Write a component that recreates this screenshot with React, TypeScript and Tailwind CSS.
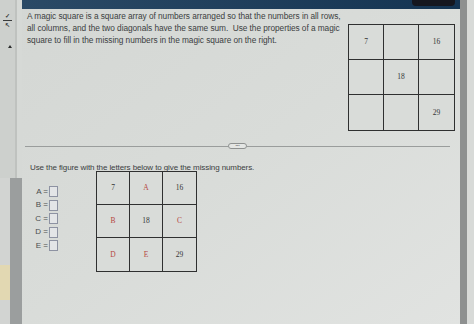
import React from "react";

const sans = { fontFamily: '"Liberation Sans", Arial, sans-serif' };
const serif = { fontFamily: '"Liberation Serif", "Times New Roman", serif' };

function Grid({ cells, size, fs }: { cells: { t: string; red?: boolean }[]; size: number; fs: string }) {
  return (
    <div
      className="grid grid-cols-3 border border-[#2f3030] bg-[#d9dcd9]"
      style={{ width: size * 3 + 2, ...serif }}
    >
      {cells.map((c, i) => (
        <div
          key={i}
          className={`flex items-center justify-center ${fs} border-[#2f3030] ${i % 3 !== 2 ? "border-r" : ""} ${i < 6 ? "border-b" : ""} ${c.red ? "text-[#b5463e]" : "text-[#353535]"}`}
          style={{ height: size }}
        >
          {c.t}
        </div>
      ))}
    </div>
  );
}

export default function App() {
  const top = [{ t: "7" }, { t: "" }, { t: "16" }, { t: "" }, { t: "18" }, { t: "" }, { t: "" }, { t: "" }, { t: "29" }];
  const bottom = [
    { t: "7" },
    { t: "A", red: true },
    { t: "16" },
    { t: "B", red: true },
    { t: "18" },
    { t: "C", red: true },
    { t: "D", red: true },
    { t: "E", red: true },
    { t: "29" },
  ];
  return (
    <div className="w-[474px] h-[324px] flex overflow-hidden bg-[#d6d8d6] [font-variant-ligatures:none]" style={sans}>
      {/* left column */}
      <div className="w-[22px] flex flex-col shrink-0">
        <div className="h-[178px] flex">
          <div className="w-[15px] bg-[#cdd0cd] flex flex-col items-center pt-[13px]">
            <div className="flex flex-col items-center leading-none text-[#3a3c3c]">
              <span className="text-[6px] leading-[6px] font-bold">✓</span>
              <span className="block w-[9px] h-[1px] bg-[#3a3c3c] my-[1px]"></span>
              <span className="text-[6px] leading-[6px] font-bold">↖</span>
            </div>
            <div className="mt-[17px] ml-[5px] w-0 h-0 border-l-[2px] border-r-[2px] border-b-[3px] border-l-transparent border-r-transparent border-b-[#2a2c2c]"></div>
          </div>
          <div className="w-[2px] bg-[#bfc2bf]"></div>
          <div className="flex-1 bg-[#d6d9d6]"></div>
        </div>
        <div className="flex-1 flex">
          <div className="w-[10px] flex flex-col bg-[#d2d4d2]">
            <div className="h-[87px]"></div>
            <div className="h-[35px] bg-[#e2d8b2]"></div>
          </div>
          <div className="w-[12px] bg-[#9b9e9e]"></div>
        </div>
      </div>

      {/* main panel */}
      <div className="w-[438px] shrink-0 flex flex-col bg-gradient-to-br from-[#d4d7d4] via-[#d9dcd9] to-[#e1e3e1]">
        <div className="h-[9px] flex bg-gradient-to-r from-[#2b4a66] to-[#143452]">
          <div className="ml-auto mr-[5px] w-[43px] h-[6px] rounded-b-[4px] bg-[#15171f]"></div>
        </div>
        <div className="flex">
          <p className="ml-[5px] mt-[1px] w-[321px] shrink-0 text-[8.3px] leading-[12px] tracking-[-0.05px] text-[#3b3e3f]">
            A magic square is a square array of numbers arranged so that the numbers in all rows, all columns, and the two diagonals have the same sum.&nbsp; Use the properties of a magic square to fill in the missing numbers in the magic square on the right.
          </p>
          <div className="ml-auto mr-[5px] mt-[15px]">
            <Grid cells={top} size={35} fs="text-[7.5px]" />
          </div>
        </div>
        <div className="mt-[12px] ml-[3px] mr-[10px] flex items-center">
          <div className="flex-1 h-[1px] bg-[#9a9d9c]"></div>
          <div className="w-[19px] h-[6px] rounded-full border border-[#8e9190] bg-[#e4e6e4] flex items-center justify-center text-[4px] leading-none text-[#777]">
            •••
          </div>
          <div className="flex-1 h-[1px] bg-[#9a9d9c]"></div>
        </div>
        <p className="ml-[8px] mt-[14px] text-[8px] leading-[10px] tracking-[-0.1px] text-[#3b3e3f]">
          Use the figure with the letters below to give the missing numbers.
        </p>
        <div className="flex mt-[-2px]">
          <div className="ml-[10px] mt-[15px] flex flex-col gap-[2.6px]">
            {["A", "B", "C", "D", "E"].map((l) => (
              <div key={l} className="flex items-center h-[11px]">
                <span className="w-[16px] text-right text-[8px] text-[#4a4d4e]">{l} =</span>
                <div className="ml-[1px] w-[9px] h-[11px] border border-[#8d92a2] bg-[#e3e5e7]"></div>
              </div>
            ))}
          </div>
          <div className="ml-[38px]">
            <Grid cells={bottom} size={33} fs="text-[7.5px]" />
          </div>
        </div>
      </div>

      {/* right edge */}
      <div className="w-[7px] shrink-0 bg-[#8e9090]"></div>
      <div className="flex-1 bg-[#d8dad8]"></div>
    </div>
  );
}
